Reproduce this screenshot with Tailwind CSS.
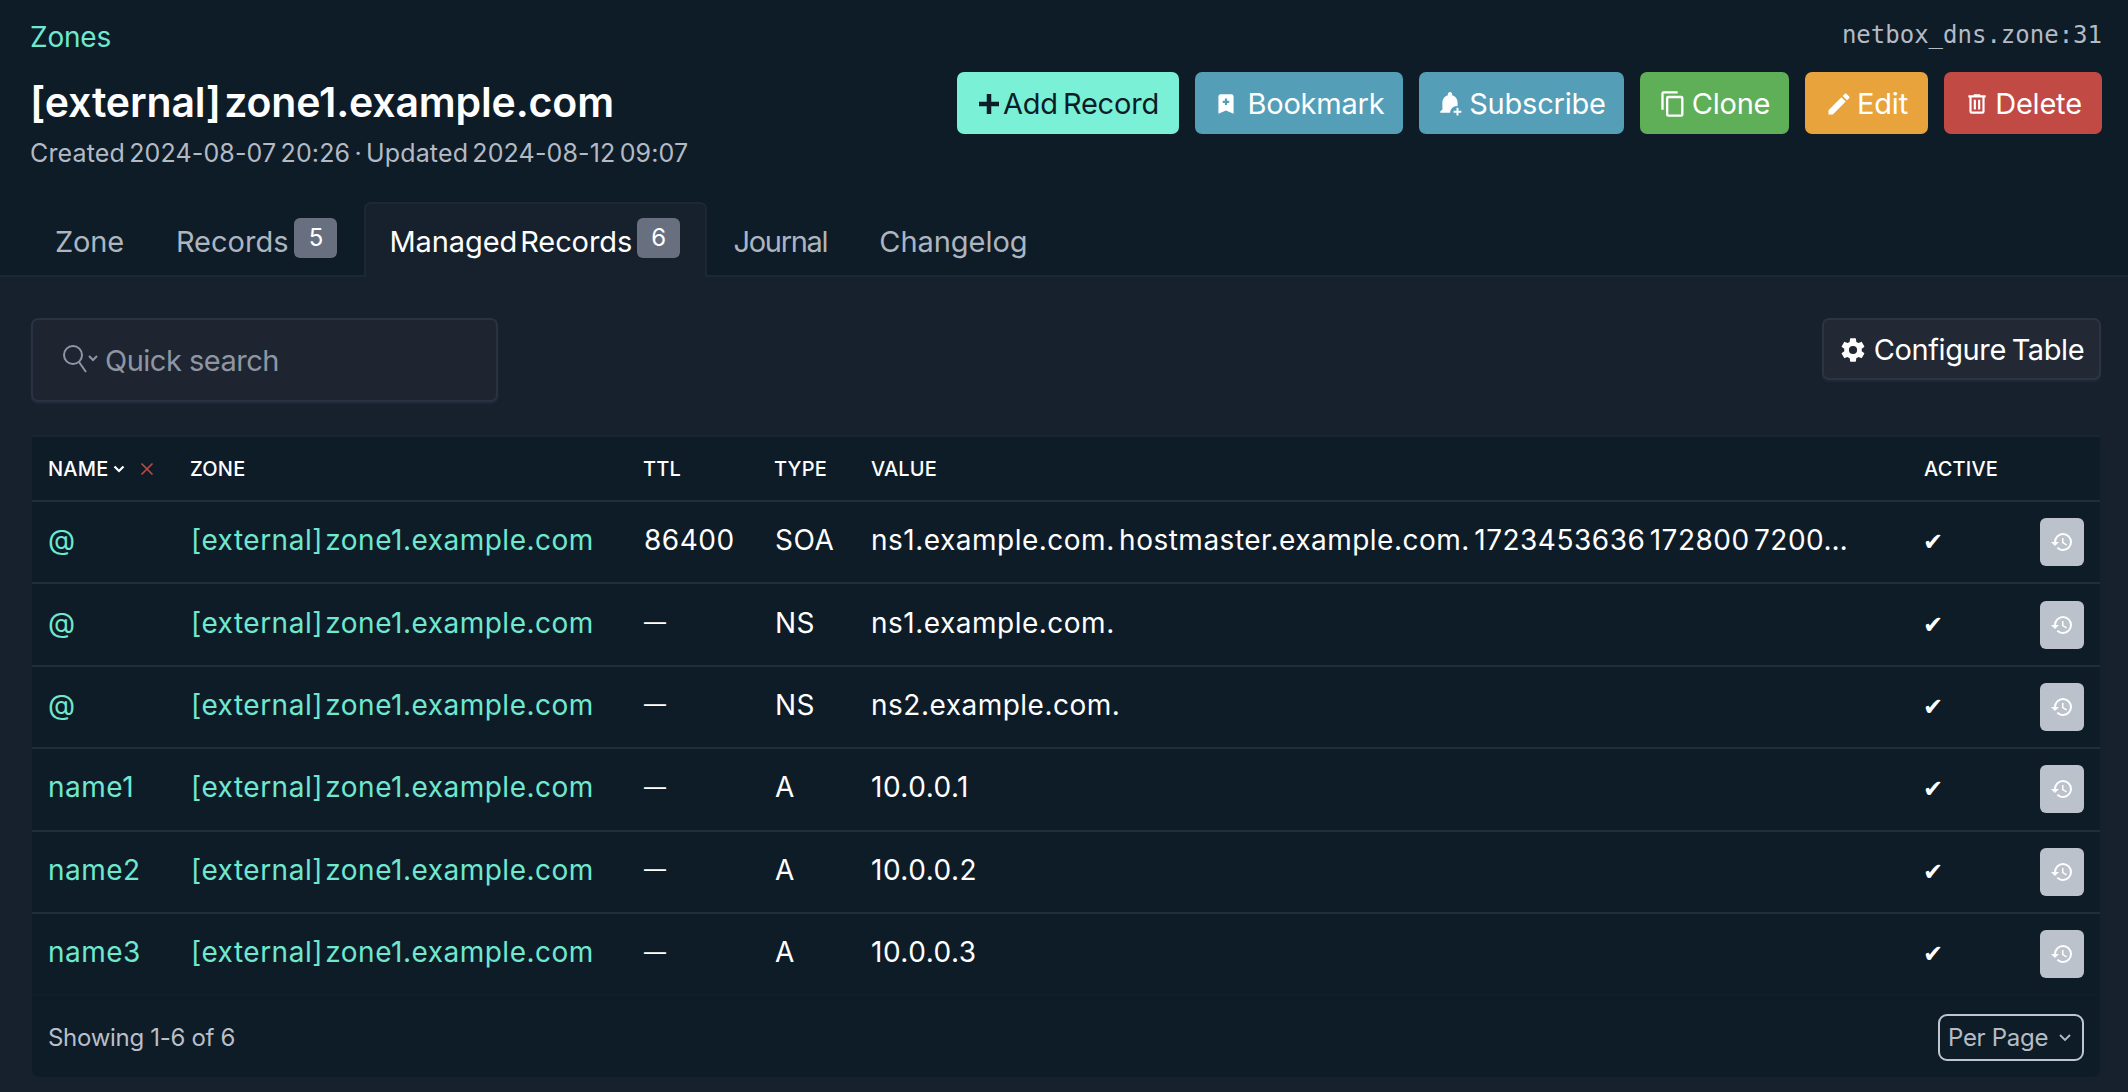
<!DOCTYPE html>
<html lang="en">
<head>
  <meta charset="UTF-8" />
  <title>[external] zone1.example.com</title>
  <script src="https://cdn.jsdelivr.net/npm/@tailwindcss/browser@4"></script>
</head>
<body class="h-[1092px] overflow-hidden bg-[#17212d] font-['Inter',sans-serif] text-white">

  <!-- Page header -->
  <header class="h-[277px] bg-[#0e1c28] border-b-2 border-[#1c2837] relative">
    <div class="flex justify-between px-[30px] pt-[19px] h-[72px]">
      <a class="text-[28px] leading-[36px] text-[#6fe8cf] tracking-[-0.2px]">Zones</a>
      <span class="font-['DejaVu_Sans_Mono',monospace] text-[24px] leading-[30px] text-[#b4bac4] pt-[1px] mr-[-4px]">netbox_dns.zone:31</span>
    </div>
    <div class="flex justify-between px-[26px] pl-[30px]">
      <div>
        <h1 class="text-[41px] leading-[60px] font-semibold tracking-[-0.15px] [word-spacing:-7px]">[external] zone1.example.com</h1>
        <p class="text-[25px] leading-[36px] mt-[3px] text-[#b4bac4] tracking-[0.15px] [word-spacing:-3px]">Created 2024-08-07 20:26 · Updated 2024-08-12 09:07</p>
      </div>
      <div class="flex gap-[16px] h-[62px] text-[29px] tracking-[-0.2px]">
        <button class="w-[222px] pt-[1px] rounded-[7px] bg-[#7af0d6] text-[#0e1c28] flex items-center justify-center gap-[2px] [word-spacing:-3px]">
          <svg class="w-[24px] h-[24px]" viewBox="0 0 24 24" fill="none" stroke="currentColor" stroke-width="4.5"><path d="M12 2v20M2 12h20"/></svg>Add Record</button>
        <button class="w-[208px] pt-[1px] rounded-[7px] bg-[#549eb8] flex items-center justify-center gap-[8px]">
          <svg class="w-[26px] h-[26px]" viewBox="0 0 24 24" fill="currentColor"><path d="M17,3A2,2 0 0,1 19,5V21L12,18L5,21V5C5,3.89 5.9,3 7,3H17M11,7V9H9V11H11V13H13V11H15V9H13V7H11Z"/></svg>Bookmark</button>
        <button class="w-[205px] pt-[1px] rounded-[7px] bg-[#549eb8] flex items-center justify-center gap-[6px]">
          <svg class="w-[26px] h-[28px]" viewBox="0 0 24 24" fill="currentColor"><path d="M12 1c1.1 0 2 .9 2 2v1c3 .9 5 3.6 5 6.7V14a6 6 0 0 0-6.9 6H3v-1l2-2v-6.3C5 7.6 7 4.900 10 4V3c0-1.100.9-2 2-2zM18 15.500h1.800v2.700h2.700V20h-2.700v2.700H18V20h-2.700v-1.800H18z"/></svg>Subscribe</button>
        <button class="w-[149px] pt-[1px] rounded-[7px] bg-[#5fae58] flex items-center justify-center gap-[5px]">
          <svg class="w-[28px] h-[28px]" viewBox="0 0 24 24" fill="currentColor"><path d="M19,21H8V7H19M19,5H8A2,2 0 0,0 6,7V21A2,2 0 0,0 8,23H19A2,2 0 0,0 21,21V7A2,2 0 0,0 19,5M16,1H4A2,2 0 0,0 2,3V17H4V3H16V1Z"/></svg>Clone</button>
        <button class="w-[123px] pt-[1px] rounded-[7px] bg-[#e8a33d] flex items-center justify-center gap-[4px]">
          <svg class="w-[28px] h-[28px]" viewBox="0 0 24 24" fill="currentColor"><path d="M20.71,7.04C21.1,6.65 21.1,6 20.71,5.63L18.37,3.29C18,2.9 17.35,2.9 16.96,3.29L15.12,5.12L18.87,8.87M3,17.25V21H6.75L17.81,9.93L14.06,6.18L3,17.25Z"/></svg>Edit</button>
        <button class="w-[158px] pt-[1px] rounded-[7px] bg-[#c14a44] flex items-center justify-center gap-[5px]">
          <svg class="w-[26px] h-[26px]" viewBox="0 0 24 24" fill="currentColor"><path d="M9,3V4H4V6H5V19A2,2 0 0,0 7,21H17A2,2 0 0,0 19,19V6H20V4H15V3H9M7,6H17V19H7V6M9,8V17H11V8H9M13,8V17H15V8H13Z"/></svg>Delete</button>
      </div>
    </div>

    <!-- Tabs -->
    <nav class="absolute left-[30px] bottom-[-2px] h-[75px] flex text-[29px] text-[#adb5c0]">
      <a class="px-[25px] flex items-center pt-[4px] tracking-[-0.2px]">Zone</a>
      <a class="px-[27px] flex items-center gap-[6px] pt-[4px]">Records
        <span class="w-[43px] h-[40px] mt-[-8px] rounded-[6px] bg-[#68707f] text-white text-[24px] flex items-center justify-center">5</span></a>
      <a class="w-[343px] pl-[23px] flex items-center gap-[5px] pt-[3px] bg-[#17212d] text-white border-2 border-b-0 border-[#1c2837] rounded-t-[7px] tracking-[-0.1px] [word-spacing:-5px]">Managed Records
        <span class="w-[43px] h-[40px] mt-[-8px] rounded-[6px] bg-[#68707f] text-white text-[24px] flex items-center justify-center">6</span></a>
      <a class="px-[26px] flex items-center pt-[4px] tracking-[-1.3px]">Journal</a>
      <a class="px-[26px] flex items-center pt-[4px] tracking-[-0.05px]">Changelog</a>
    </nav>
  </header>

  <main class="pl-[31px] pr-[27px] pt-[41px]">
    <!-- Controls -->
    <div class="flex justify-between h-[117px]">
      <div class="w-[467px] h-[84px] rounded-[7px] bg-[#1e2531] border-2 border-[#293243] shadow-[0_2px_2px_#1f2a38] flex items-center pl-[29px] gap-[7px] pt-[2px] text-[29px] tracking-[-0.5px] text-[#8f96a3]">
        <svg class="w-[36px] h-[30px] mt-[-4px]" viewBox="0 0 36 30" fill="none" stroke="currentColor" stroke-width="2"><circle cx="11" cy="11" r="9"/><path d="M17 18l7 10M27 12l4 4 4-4"/></svg>
        <span>Quick search</span>
      </div>
      <button class="w-[279px] h-[62px] pt-[1px] rounded-[7px] bg-[#222935] border-2 border-[#2b3444] shadow-[0_2px_2px_#1f2a38] flex items-center justify-center gap-[7px] text-[29px] tracking-[-0.4px] [word-spacing:-2px]">
        <svg class="w-[28px] h-[28px]" viewBox="0 0 24 24" fill="currentColor"><path d="M12,15.5A3.5,3.5 0 0,1 8.5,12A3.5,3.5 0 0,1 12,8.5A3.5,3.5 0 0,1 15.5,12A3.5,3.5 0 0,1 12,15.5M19.43,12.97C19.47,12.65 19.5,12.33 19.5,12C19.5,11.67 19.47,11.34 19.43,11L21.54,9.37C21.73,9.22 21.78,8.95 21.66,8.73L19.66,5.27C19.54,5.05 19.27,4.96 19.05,5.05L16.56,6.05C16.04,5.66 15.5,5.32 14.87,5.07L14.5,2.42C14.46,2.18 14.25,2 14,2H10C9.75,2 9.54,2.18 9.5,2.42L9.13,5.07C8.5,5.32 7.96,5.66 7.44,6.05L4.95,5.05C4.73,4.96 4.46,5.05 4.34,5.27L2.34,8.73C2.21,8.95 2.27,9.22 2.46,9.37L4.57,11C4.53,11.34 4.5,11.67 4.5,12C4.5,12.33 4.53,12.65 4.57,12.97L2.46,14.63C2.27,14.78 2.21,15.05 2.34,15.27L4.34,18.73C4.46,18.95 4.73,19.03 4.95,18.95L7.44,17.94C7.96,18.34 8.5,18.68 9.13,18.93L9.5,21.58C9.54,21.82 9.75,22 10,22H14C14.25,22 14.46,21.82 14.5,21.58L14.87,18.93C15.5,18.67 16.04,18.34 16.56,17.94L19.05,18.95C19.27,19.03 19.54,18.95 19.66,18.73L21.66,15.27C21.78,15.05 21.73,14.78 21.54,14.63L19.43,12.97Z"/></svg>
        Configure Table
      </button>
    </div>

    <!-- Records table -->
    <div class="w-[2068px] ml-[1px] h-[642px] bg-[#0e1c28] rounded-b-[7px] border-t-2 border-[#1a2534]">
      <table class="w-full table-fixed border-collapse text-[28px] tracking-[0.5px]">
        <colgroup>
          <col class="w-[143px]" /><col class="w-[453px]" /><col class="w-[131px]" /><col class="w-[96px]" /><col class="w-[1053px]" /><col class="w-[120px]" /><col class="w-[72px]" />
        </colgroup>
        <thead>
          <tr class="h-[64px] border-b-2 border-[#212d3d] text-left text-[20px] tracking-[0.2px]">
            <th class="pl-[16px] font-medium">
              <span class="flex items-center">NAME
                <svg class="w-[12px] h-[12px] ml-[5px]" viewBox="0 0 12 12" fill="none" stroke="currentColor" stroke-width="2.200"><path d="M1.500 3.500 6 8l4.500-4.500"/></svg>
                <svg class="w-[14px] h-[14px] ml-[15px]" viewBox="0 0 14 14" fill="none" stroke="#c14a44" stroke-width="1.600"><path d="M1.500 1.500l11 11M12.500 1.500l-11 11"/></svg>
              </span>
            </th>
            <th class="pl-[15px] font-medium">ZONE</th>
            <th class="pl-[15px] font-medium">TTL</th>
            <th class="pl-[15px] font-medium">TYPE</th>
            <th class="pl-[16px] font-medium">VALUE</th>
            <th class="pl-[16px] font-medium">ACTIVE</th>
            <th></th>
          </tr>
        </thead>
        <tbody id="rows"></tbody>
      </table>
      <div class="flex justify-between items-center pl-[16px] pr-[16px] pt-[18px]">
        <span class="text-[24px] text-[#b9bfc8] tracking-[-0.3px]">Showing 1-6 of 6</span>
        <button class="w-[146px] h-[47px] rounded-[9px] border-2 border-[#c0c6d0] text-[#b6bcc6] text-[24px] tracking-[-0.3px] flex items-center pl-[8px] gap-[10px]">Per Page
          <svg class="w-[14px] h-[10px]" viewBox="0 0 14 10" fill="none" stroke="currentColor" stroke-width="1.800"><path d="M2 2l5 5 5-5"/></svg>
        </button>
      </div>
    </div>
  </main>

  <script>
    const records = [
      ['@', '86400', 'SOA', 'ns1.example.com. hostmaster.example.com. 1723453636 172800 7200…'],
      ['@', '—', 'NS', 'ns1.example.com.'],
      ['@', '—', 'NS', 'ns2.example.com.'],
      ['name1', '—', 'A', '10.0.0.1'],
      ['name2', '—', 'A', '10.0.0.2'],
      ['name3', '—', 'A', '10.0.0.3'],
    ];
    const history = '<svg class="w-[24px] h-[24px]" viewBox="0 0 24 24" fill="currentColor"><path d="M13.5,8H12V13L16.28,15.54L17,14.33L13.5,12.25V8M13,3A9,9 0 0,0 4,12H1L4.96,16.03L9,12H6A7,7 0 0,1 13,5A7,7 0 0,1 20,12A7,7 0 0,1 13,19C11.07,19 9.32,18.21 8.06,16.94L6.64,18.36C8.27,20 10.5,21 13,21A9,9 0 0,0 22,12A9,9 0 0,0 13,3"/></svg>';
    document.getElementById('rows').innerHTML = records.map(([name, ttl, type, value], i) => `
      <tr class="h-[82.400px] border-b-2 ${i === 5 ? 'border-[#101d2b]' : 'border-[#212d3d]'}">
        <td class="pl-[16px] pb-[4px] text-[#6fe8cf]">${name}</td>
        <td class="pl-[16px] pb-[4px] text-[#6fe8cf] [word-spacing:-6px]">[external] zone1.example.com</td>
        <td class="pl-[16px] pb-[4px] ${ttl === '—' ? 'text-[22px]' : ''}">${ttl}</td>
        <td class="pl-[16px] pb-[4px]">${type}</td>
        <td class="pl-[16px] pb-[4px] [word-spacing:-4px] whitespace-nowrap">${value}</td>
        <td class="pl-[15px] font-['DejaVu_Sans',sans-serif] text-[24px]">✔</td>
        <td class="pl-[12px]"><span class="w-[44px] h-[48px] rounded-[6px] bg-[#bcc2cc] flex items-center justify-center">${history}</span></td>
      </tr>`).join('');
  </script>
</body>
</html>
